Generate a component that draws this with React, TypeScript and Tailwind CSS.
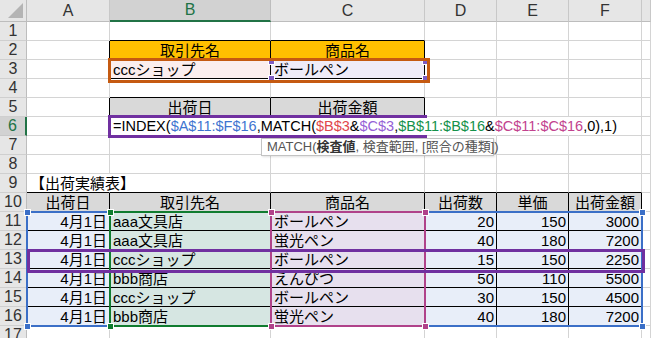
import React from 'react'

type Cell = {
  t?: React.ReactNode
  a?: 'l' | 'c' | 'r'
  bg?: string
  box?: boolean
  noR?: boolean
  over?: boolean
}

const COLS = ['A', 'B', 'C', 'D', 'E', 'F', 'G']
const ROWS = Array.from({ length: 17 }, (_, i) => i + 1)

// formula text split by reference colour
const parts: [string, string][] = [
  ['=INDEX(', ''],
  ['$A$11:$F$16', 'text-[#3d74d0]'],
  [',MATCH(', ''],
  ['$B$3', 'text-[#e1464c]'],
  ['&', ''],
  ['$C$3', 'text-[#9561d6]'],
  [',', ''],
  ['$B$11:$B$16', 'text-[#14914a]'],
  ['&', ''],
  ['$C$11:$C$16', 'text-[#c2428e]'],
  [',0),1)', ''],
]

const formula = (
  <span className="text-[14.5px]">
    {parts.map(([s, cls], i) => (
      <span key={i} className={cls}>{s}</span>
    ))}
  </span>
)

const table = [
  ['4月1日', 'aaa文具店', 'ボールペン', '20', '150', '3000'],
  ['4月1日', 'aaa文具店', '蛍光ペン', '40', '180', '7200'],
  ['4月1日', 'cccショップ', 'ボールペン', '15', '150', '2250'],
  ['4月1日', 'bbb商店', 'えんぴつ', '50', '110', '5500'],
  ['4月1日', 'cccショップ', 'ボールペン', '30', '150', '4500'],
  ['4月1日', 'bbb商店', '蛍光ペン', '40', '180', '7200'],
]
const heads = ['出荷日', '取引先名', '商品名', '出荷数', '単価', '出荷金額']
const fills = ['bg-[#e8eef9]', 'bg-[#d6e6e2]', 'bg-[#e7e0ee]', 'bg-[#e8eef9]', 'bg-[#e8eef9]', 'bg-[#e8eef9]']
const aligns: ('l' | 'r')[] = ['r', 'l', 'l', 'r', 'r', 'r']

const cells: Record<string, Cell> = {
  B2: { t: '取引先名', a: 'c', bg: 'bg-[#ffc000]', box: true },
  C2: { t: '商品名', a: 'c', bg: 'bg-[#ffc000]', box: true },
  B3: { t: 'cccショップ', bg: 'bg-[#fbeeee]', box: true },
  C3: { t: 'ボールペン', bg: 'bg-[#efecf8]', box: true },
  B5: { t: '出荷日', a: 'c', bg: 'bg-[#d9d9d9]', box: true },
  C5: { t: '出荷金額', a: 'c', bg: 'bg-[#d9d9d9]', box: true },
  B6: { t: formula, noR: true, over: true },
  C6: { noR: true },
  D6: { noR: true },
  E6: { noR: true },
  A9: { t: '【出荷実績表】', noR: true, over: true },
}
heads.forEach((h, i) => {
  cells[COLS[i] + 10] = { t: h, a: 'c', bg: 'bg-[#d9d9d9]', box: true }
})
table.forEach((row, ri) => {
  row.forEach((v, ci) => {
    cells[COLS[ci] + (11 + ri)] = { t: v, a: aligns[ci], bg: fills[ci], box: true }
  })
})

const boxed = (ci: number, r: number) => !!cells[COLS[ci] + r]?.box

// reference-range corner handles
const handles: [number, number, string][] = [
  [27, 212, 'bg-[#3b6fc7]'], [27, 326, 'bg-[#3b6fc7]'],
  [642, 212, 'bg-[#3b6fc7]'], [642, 326, 'bg-[#3b6fc7]'],
  [110, 212, 'bg-[#107c2f]'], [110, 326, 'bg-[#107c2f]'],
  [271, 212, 'bg-[#b0428a]'], [271, 326, 'bg-[#b0428a]'],
  [425, 212, 'bg-[#b0428a]'], [425, 326, 'bg-[#b0428a]'],
  [271, 61, 'bg-[#7d5cc4]'], [271, 78, 'bg-[#7d5cc4]'],
  [425, 61, 'bg-[#7d5cc4]'], [425, 78, 'bg-[#7d5cc4]'],
]

export default function App() {
  return (
    <div className="relative w-[651px] h-[338px] overflow-hidden bg-white font-['Liberation_Sans','Noto_Sans_CJK_JP',sans-serif] text-[15px] text-black">
      <div className="grid grid-cols-[27px_83px_161px_154px_72px_72px_73px_1fr] grid-rows-[22px_repeat(17,19px)]">
        {/* corner */}
        <div className="bg-[#e6e6e6] border-r border-b border-[#bdbdbd]">
          <svg width="26" height="21" viewBox="0 0 26 21">
            <polygon points="8,18 23,18 23,3" fill="#b4b4b4" />
          </svg>
        </div>
        {COLS.map((c) =>
          c === 'B' ? (
            <div key={c} className="flex items-center justify-center bg-[#d2d2d2] border-r border-[#bdbdbd] border-b-2 border-b-[#217346] text-[#217346] text-[16px]">
              {c}
            </div>
          ) : (
            <div key={c} className="flex items-center justify-center bg-[#e6e6e6] border-r border-b border-[#c8c8c8] border-b-[#bdbdbd] text-[#333] text-[16px]">
              {c === 'G' ? '' : c}
            </div>
          )
        )}

        {ROWS.map((r) => (
          <React.Fragment key={r}>
            {r === 6 ? (
              <div className="flex items-center justify-center bg-[#d2d2d2] border-b border-b-[#c8c8c8] border-r-2 border-r-[#217346] text-[#217346] text-[16px] leading-none">
                {r}
              </div>
            ) : (
              <div className="flex items-center justify-center bg-[#e6e6e6] border-b border-b-[#cfcfcf] border-r border-r-[#bdbdbd] text-[#333] text-[16px] leading-none">
                {r}
              </div>
            )}
            {COLS.map((c, ci) => {
              const cell = cells[c + r] ?? {}
              const rb = cell.box || boxed(ci + 1, r)
                ? 'border-r-black'
                : cell.noR
                  ? 'border-r-transparent'
                  : 'border-r-[#d4d4d4]'
              const bb = cell.box || boxed(ci, r + 1) ? 'border-b-black' : 'border-b-[#d4d4d4]'
              const al = cell.a === 'c' ? 'justify-center' : cell.a === 'r' ? 'justify-end pr-[2px]' : 'justify-start pl-[3px]'
              return (
                <div
                  key={c}
                  className={`flex items-center border-r border-b whitespace-nowrap leading-[19px] ${rb} ${bb} ${al} ${cell.bg ?? ''} ${cell.over ? 'overflow-visible' : 'overflow-hidden'}`}
                >
                  {cell.t}
                </div>
              )
            })}
          </React.Fragment>
        ))}
      </div>

      {/* reference ranges of the formula */}
      <div className="absolute left-[26px] top-[211px] w-[85px] h-[116px] border-2 border-[#3b6fc7]" />
      <div className="absolute left-[424px] top-[211px] w-[219px] h-[116px] border-2 border-[#3b6fc7]" />
      <div className="absolute left-[109px] top-[211px] w-[163px] h-[116px] border-2 border-[#107c2f]" />
      <div className="absolute left-[270px] top-[211px] w-[156px] h-[116px] border-2 border-[#b0428a]" />
      {handles.map(([x, y, cls], i) => (
        <div
          key={i}
          className={`absolute w-[7px] h-[7px] border border-white ${cls}`}
          style={{ left: x - 3, top: y - 3 }}
        />
      ))}

      {/* drawn rectangles */}
      <div className="absolute left-[108px] top-[58px] w-[322px] h-[25px] border-[3px] border-[#c55a11]" />
      <div className="absolute left-[108px] top-[115px] w-[319px] h-[23px] border-l-[3px] border-t-[3px] border-b-[3px] border-[#7030a0]" />
      <div className="absolute left-[27px] top-[249px] w-[618px] h-[24px] border-[3px] border-[#7030a0]" />

      {/* function tooltip */}
      <div className="absolute left-[261px] top-[138px] w-[233px] h-[18px] border border-[#c3c3c3] bg-white shadow-[1px_1px_2px_rgba(0,0,0,0.12)] pl-[5px] text-[13px] leading-[16px] text-[#555] whitespace-nowrap">
        MATCH(<b className="font-bold text-[#333]">検査値</b>, 検査範囲, [照合の種類])
      </div>
    </div>
  )
}
